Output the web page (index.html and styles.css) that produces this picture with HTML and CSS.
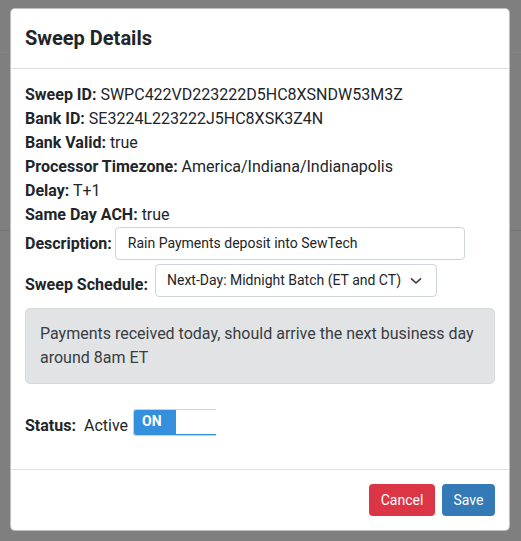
FILE: index.html
```html
<!DOCTYPE html>
<html>
<head>
<meta charset="utf-8">
<link rel="stylesheet" href="styles.css">
</head>
<body>
<div class="backdrop">
  <div class="bg-line bg-line-top"></div>
  <div class="bg-line bg-line-mid"></div>
</div>
<div class="modal">
  <div class="modal-header">
    <h5 class="modal-title">Sweep Details</h5>
  </div>
  <div class="modal-body">
    <div class="info"><b>Sweep ID:</b> SWPC422VD223222D5HC8XSNDW53M3Z</div>
    <div class="info"><b>Bank ID:</b> SE3224L223222J5HC8XSK3Z4N</div>
    <div class="info"><b>Bank Valid:</b> true</div>
    <div class="info"><b>Processor Timezone:</b> America/Indiana/Indianapolis</div>
    <div class="info"><b>Delay:</b> T+1</div>
    <div class="info"><b>Same Day ACH:</b> true</div>
    <div class="row row-desc">
      <label class="lbl lbl-desc">Description:</label>
      <div class="input">Rain Payments deposit into SewTech</div>
    </div>
    <div class="row row-sched">
      <label class="lbl lbl-sched">Sweep Schedule:</label>
      <div class="select">
        <span>Next-Day: Midnight Batch (ET and CT)</span>
        <svg class="chev" width="12" height="8" viewBox="0 0 12 8"><path d="M1.5 1.8 L6 6 L10.5 1.8" fill="none" stroke="#343a40" stroke-width="1.6" stroke-linecap="round" stroke-linejoin="round"/></svg>
      </div>
    </div>
    <div class="alert">Payments received today, should arrive the next business day around 8am ET</div>
    <div class="status-row">
      <b class="lbl-status">Status:</b>
      <span class="active">Active</span>
      <div class="toggle">
        <div class="toggle-on">ON</div>
        <div class="toggle-handle"></div>
      </div>
    </div>
  </div>
  <div class="modal-footer">
    <button class="btn btn-cancel">Cancel</button>
    <button class="btn btn-save">Save</button>
  </div>
</div>
</body>
</html>
```

FILE: styles.css
```css
html, body {
  margin: 0;
  padding: 0;
}
body {
  width: 521px;
  height: 541px;
  background: #7f7f7f;
  font-family: Roboto, "Liberation Sans", sans-serif;
  color: #212529;
  overflow: hidden;
  position: relative;
}
.backdrop {
  height: 541px;
  display: flex;
  flex-direction: column;
}
.bg-line {
  height: 1px;
  background: #747474;
}
.bg-line-top {
  margin-top: 52px;
  background: #868686;
}
.bg-line-mid {
  margin-top: 177px;
}
.modal {
  position: absolute;
  left: 10px;
  top: 8px;
  width: 500px;
  height: 523px;
  box-sizing: border-box;
  background: #fff;
  border: 1px solid rgba(0, 0, 0, 0.25);
  border-radius: 5px;
  display: flex;
  flex-direction: column;
}
.modal-header {
  padding: 15px 14px;
  border-bottom: 1px solid #dee2e6;
}
.modal-title {
  margin: 0;
  font-size: 20px;
  font-weight: 700;
  line-height: 29px;
}
.modal-body {
  flex: 1;
  padding: 14px 14px 14px;
  font-size: 16px;
  line-height: 24px;
}
.info b, .lbl, .lbl-status {
  font-weight: 700;
}
.row {
  display: flex;
}
.row-desc {
  align-items: center;
}
.lbl-desc {
  margin-right: 3px;
  padding-top: 1px;
}
.row-sched {
  margin-top: 4px;
  align-items: flex-end;
}
.lbl-sched {
  margin-right: 7px;
  margin-bottom: 0px;
}
.input, .select {
  box-sizing: border-box;
  height: 33px;
  border: 1px solid #ced4da;
  border-radius: 4px;
  font-size: 14px;
  line-height: 31px;
  padding: 0 12px;
  color: #212529;
}
.input {
  width: 350px;
}
.select {
  width: 282px;
  display: flex;
  align-items: center;
  justify-content: space-between;
  padding-left: 11px;
}
.chev {
  margin-right: 2px;
}
.alert {
  margin-top: 11px;
  background: #e2e3e5;
  border: 1px solid #d6d8db;
  border-radius: 5px;
  color: #383d41;
  padding: 13px 14px;
}
.status-row {
  margin-top: 25px;
  display: flex;
  align-items: flex-end;
  height: 27px;
}
.lbl-status, .active {
  margin-bottom: -2px;
}
.active {
  margin-left: 8px;
  margin-right: 5px;
}
.toggle {
  width: 83px;
  height: 27px;
  box-sizing: border-box;
  display: flex;
  border: 1px solid #d0d0d0;
  border-right: none;
  border-radius: 3px 0 0 3px;
  overflow: hidden;
}
.toggle-on {
  width: 42px;
  background: #3490dc;
  color: #fff;
  font-size: 14px;
  font-weight: 700;
  line-height: 23px;
  padding-left: 8px;
  box-sizing: border-box;
}
.toggle-handle {
  flex: 1;
  background: #fff;
  border-bottom: 1px solid #3490dc;
}
.modal-footer {
  border-top: 1px solid #dee2e6;
  padding: 14px;
  display: flex;
  justify-content: flex-end;
  gap: 7px;
}
.btn {
  font-family: Roboto, "Liberation Sans", sans-serif;
  font-size: 14px;
  line-height: 20px;
  height: 32px;
  padding: 6px 0;
  border: none;
  border-radius: 4px;
  color: #fff;
  box-sizing: border-box;
  text-align: center;
}
.btn-cancel {
  background: #dc3545;
  width: 66px;
}
.btn-save {
  background: #337ab7;
  width: 53px;
}
```
